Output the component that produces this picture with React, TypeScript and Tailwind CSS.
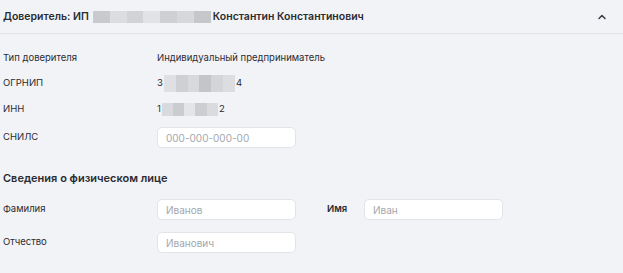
import { ChevronUp } from 'lucide-react';

function Redacted({ width, height, shades }: { width: number; height: number; shades: string[] }) {
  return (
    <span className="inline-flex overflow-hidden align-middle" style={{ width, height }}>
      {shades.map((c, i) => (
        <span key={i} className="flex-1" style={{ background: c }} />
      ))}
    </span>
  );
}

function TextInput({ placeholder }: { placeholder: string }) {
  return (
    <input
      placeholder={placeholder}
      className="h-[21px] w-[139px] rounded-[5px] border border-[#e2e4ea] bg-white px-[8px] text-[10px] text-[#333] placeholder:text-[#a3a7ae] outline-none"
    />
  );
}

export default function App() {
  return (
    <div className="h-[273px] w-[623px] overflow-hidden bg-[#f2f3f7] text-[#2a2c31] font-['Inter',sans-serif]">
      <div className="flex h-[34px] items-center justify-between border-b border-[#e1e3e8] pl-[3px] pr-[15px]">
        <div className="flex items-center text-[10.5px] font-semibold">
          <span>Доверитель: ИП</span>
          <span className="ml-[4px] mr-[2px]">
            <Redacted width={118} height={12} shades={['#c9cace', '#dcdde0', '#d2d3d6', '#e2e3e6', '#cfd0d3', '#d7d8db', '#c6c7cb']} />
          </span>
          <span>Константин Константинович</span>
        </div>
        <ChevronUp size={12} strokeWidth={3} className="text-[#3a3c42]" />
      </div>

      <div className="flex flex-col pl-[3px] text-[9.5px]">
        <div className="mt-[16px] flex h-[16px] items-center">
          <span className="w-[154px]">Тип доверителя</span>
          <span>Индивидуальный предприниматель</span>
        </div>
        <div className="mt-[9px] flex h-[16px] items-center">
          <span className="w-[154px]">ОГРНИП</span>
          <span className="flex items-center gap-[1px]">
            3
            <Redacted width={71} height={17} shades={['#dfe0e3', '#cfd0d4', '#d8d9dc', '#c4c5c9', '#d4d5d8', '#dcdde0']} />
            4
          </span>
        </div>
        <div className="mt-[10px] flex h-[16px] items-center">
          <span className="w-[154px]">ИНН</span>
          <span className="flex items-center gap-[1px]">
            1
            <Redacted width={56} height={13} shades={['#d9dadd', '#cbccd0', '#e4e5e8', '#cdced2', '#dadbde']} />
            2
          </span>
        </div>
        <div className="mt-[10px] flex items-center">
          <span className="w-[154px]">СНИЛС</span>
          <TextInput placeholder="000-000-000-00" />
        </div>

        <div className="mt-[23px] h-[14px] text-[11px] font-semibold leading-[14px]">Сведения о физическом лице</div>

        <div className="mt-[14px] flex items-center">
          <span className="w-[154px]">Фамилия</span>
          <TextInput placeholder="Иванов" />
          <span className="ml-[31px] w-[37px] font-semibold">Имя</span>
          <TextInput placeholder="Иван" />
        </div>
        <div className="mt-[12px] flex items-center">
          <span className="w-[154px]">Отчество</span>
          <TextInput placeholder="Иванович" />
        </div>
      </div>
    </div>
  );
}
